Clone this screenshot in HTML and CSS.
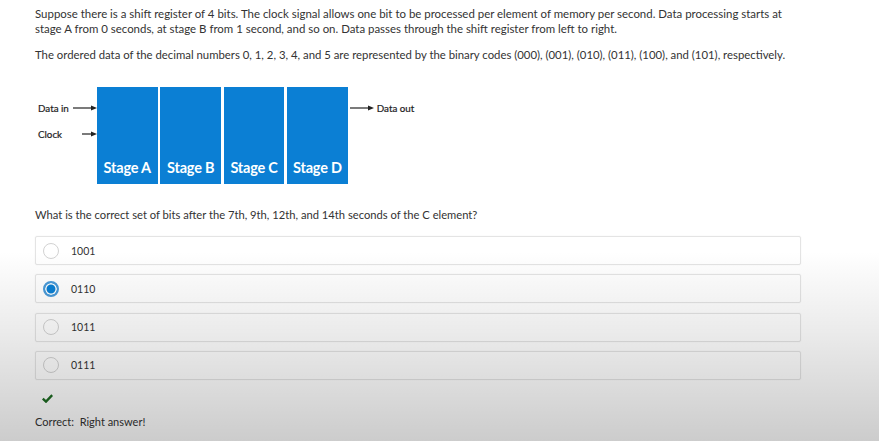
FILE: index.html
```html
<!DOCTYPE html>
<html>
<head>
<meta charset="utf-8">
<link rel="stylesheet" href="styles.css">
</head>
<body>
<div class="page">
  <p class="intro">Suppose there is a shift register of 4 bits. The clock signal allows one bit to be processed per element of memory per second. Data processing starts at stage A from 0 seconds, at stage B from 1 second, and so on. Data passes through the shift register from left to right.</p>
  <p class="intro second">The ordered data of the decimal numbers 0, 1, 2, 3, 4, and 5 are represented by the binary codes (000), (001), (010), (011), (100), and (101), respectively.</p>

  <div class="diagram">
    <div class="inputs">
      <div class="in-row">
        <span class="lbl">Data in</span>
        <svg class="arrow" width="24" height="6" viewBox="0 0 24 6"><line x1="0" y1="3" x2="19" y2="3" stroke="#222" stroke-width="1.2"/><polygon points="18,0.5 24,3 18,5.5" fill="#222"/></svg>
      </div>
      <div class="in-row">
        <span class="lbl">Clock</span>
        <svg class="arrow" width="15" height="6" viewBox="0 0 15 6"><line x1="0" y1="3" x2="10" y2="3" stroke="#222" stroke-width="1.2"/><polygon points="9,0.5 15,3 9,5.5" fill="#222"/></svg>
      </div>
    </div>
    <div class="stages">
      <div class="stage">Stage A</div>
      <div class="stage">Stage B</div>
      <div class="stage">Stage C</div>
      <div class="stage">Stage D</div>
    </div>
    <div class="outputs">
      <div class="in-row">
        <svg class="arrow" width="24" height="6" viewBox="0 0 24 6"><line x1="0" y1="3" x2="19" y2="3" stroke="#222" stroke-width="1.2"/><polygon points="18,0.5 24,3 18,5.5" fill="#222"/></svg>
        <span class="lbl">Data out</span>
      </div>
    </div>
  </div>

  <p class="question">What is the correct set of bits after the 7th, 9th, 12th, and 14th seconds of the C element?</p>

  <div class="options">
    <label class="option"><span class="radio"></span><span class="opt-text">1001</span></label>
    <label class="option"><span class="radio checked"></span><span class="opt-text">0110</span></label>
    <label class="option"><span class="radio"></span><span class="opt-text">1011</span></label>
    <label class="option"><span class="radio"></span><span class="opt-text">0111</span></label>
  </div>

  <div class="feedback">
    <svg class="check" width="11" height="9" viewBox="0 0 11 9"><path d="M0.8 4.6 L4 7.6 L10.2 1.2" fill="none" stroke="#1d6b22" stroke-width="2.4" stroke-linejoin="miter"/></svg>
    <p class="result">Correct:&nbsp;&nbsp;Right answer!</p>
  </div>
</div>
<div class="shade"></div>
</body>
</html>
```

FILE: styles.css
```css
html, body {
  margin: 0;
  padding: 0;
  background: #ffffff;
}
body {
  font-family: Lato, "Noto Sans", sans-serif;
  color: #333333;
  width: 879px;
  height: 441px;
  overflow: hidden;
}
.page {
  padding: 6px 0 0 35px;
}
.intro {
  margin: 0;
  font-size: 11.45px;
  line-height: 15px;
  width: 752px;
}
.intro.second {
  margin-top: 11px;
  width: 800px;
  font-size: 11.35px;
}
.diagram {
  display: flex;
  margin-top: 25px;
  margin-left: 3px;
  height: 97px;
}
.inputs {
  width: 59px;
  display: flex;
  flex-direction: column;
  gap: 12px;
  padding-top: 14px;
}
.in-row {
  display: flex;
  align-items: center;
  justify-content: space-between;
  height: 14px;
}
.lbl {
  font-size: 9.8px;
  color: #222;
  -webkit-text-stroke: 0.2px #222;
}
.stages {
  display: flex;
  gap: 2.8px;
}
.stage {
  width: 60.6px;
  height: 97px;
  background: #0b7fd4;
  color: #ffffff;
  font-weight: 700;
  font-size: 14.5px;
  display: flex;
  align-items: flex-end;
  justify-content: center;
  padding-bottom: 8px;
  box-sizing: border-box;
  letter-spacing: -0.2px;
}
.outputs {
  padding-top: 14px;
  margin-left: 2px;
}
.outputs .in-row {
  gap: 3px;
  justify-content: flex-start;
}
.question {
  margin: 23px 0 0 0;
  font-size: 11.2px;
  line-height: 15px;
}
.options {
  margin-top: 14px;
  width: 766px;
  display: flex;
  flex-direction: column;
  gap: 9.3px;
}
.option {
  display: flex;
  align-items: center;
  height: 29px;
  box-sizing: border-box;
  border: 1px solid #e4e4e4;
  border-radius: 2px;
  box-shadow: 0 0 2px rgba(0,0,0,0.06);
  background: #ffffff;
  padding-left: 7px;
}
.radio {
  width: 16px;
  height: 16px;
  box-sizing: border-box;
  border-radius: 50%;
  border: 1px solid #d2d2d2;
  background: #fff;
  flex-shrink: 0;
}
.radio.checked {
  border: 2px solid #4a9ad8;
  background: #0a7fd3;
  box-shadow: inset 0 0 0 1.5px #ffffff;
}
.opt-text {
  margin-left: 12px;
  font-size: 10.5px;
  color: #333;
}
.feedback {
  padding-left: 7px;
  margin-top: 14px;
}
.check {
  display: block;
}
.result {
  margin: 11px 0 0 -7px;
  font-size: 11px;
  line-height: 15px;
}
.shade {
  position: absolute;
  left: 0;
  top: 0;
  width: 879px;
  height: 441px;
  pointer-events: none;
  background: linear-gradient(to bottom, rgba(0,0,0,0) 0%, rgba(0,0,0,0) 57%, rgba(0,0,0,0.08) 75%, rgba(0,0,0,0.2) 100%);
}
```
